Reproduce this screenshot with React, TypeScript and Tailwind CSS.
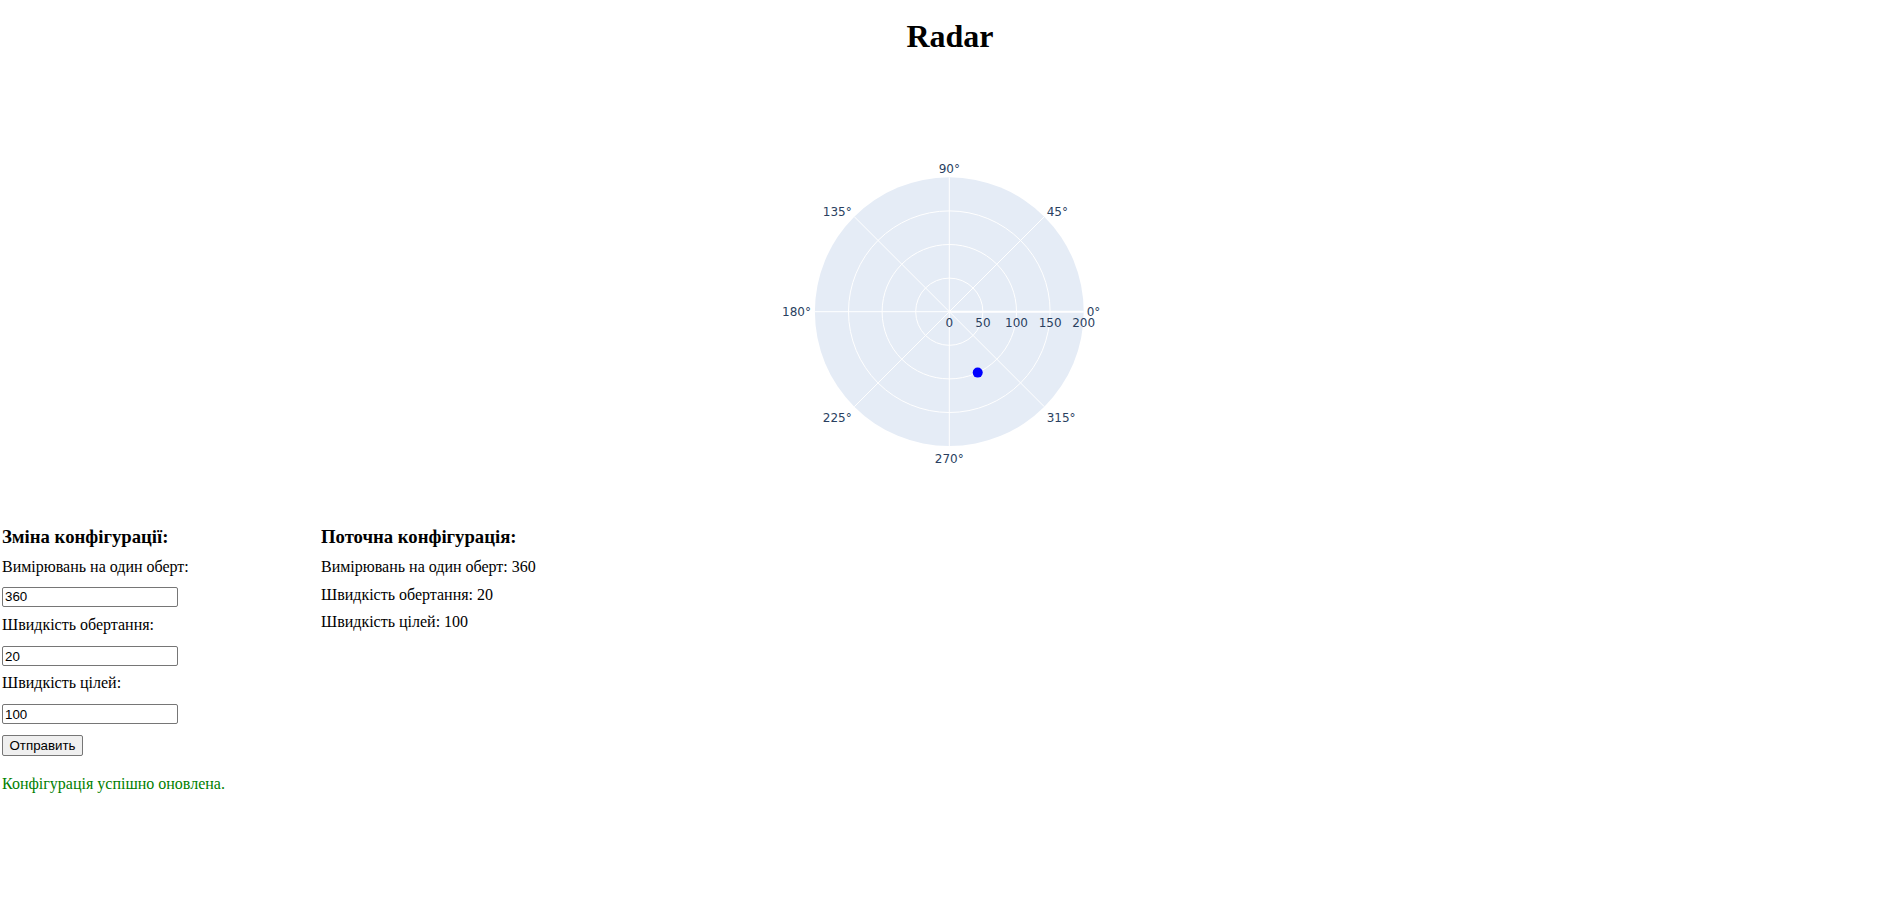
import { useState } from 'react'

const CX = 199.3
const CY = 257.7
const R = 134.4
const MAX_R = 200

// point on the polar plot, r in data units, theta in degrees
const toXY = (r: number, theta: number) => {
  const rad = (theta * Math.PI) / 180
  const d = (r / MAX_R) * R
  return { x: CX + d * Math.cos(rad), y: CY - d * Math.sin(rad) }
}

const angleLabels = [
  { text: '0°', x: 336.7, y: 262, anchor: 'start' },
  { text: '45°', x: 296.7, y: 162, anchor: 'start' },
  { text: '90°', x: CX, y: 118.5, anchor: 'middle' },
  { text: '135°', x: 101.7, y: 162, anchor: 'end' },
  { text: '180°', x: 61, y: 262, anchor: 'end' },
  { text: '225°', x: 101.7, y: 367.7, anchor: 'end' },
  { text: '270°', x: CX, y: 408.5, anchor: 'middle' },
  { text: '315°', x: 296.7, y: 367.7, anchor: 'start' },
]

function RadarChart({ targets }: { targets: { r: number; theta: number }[] }) {
  return (
    <svg width={400} height={472} className="block mx-auto">
      <circle cx={CX} cy={CY} r={R} fill="#E5ECF6" />
      {[1, 2, 3].map((i) => (
        <circle key={i} cx={CX} cy={CY} r={(R / 4) * i} fill="none" stroke="#ffffff" strokeWidth={1} />
      ))}
      {[0, 45, 90, 135, 180, 225, 270, 315].map((a) => {
        const p = toXY(MAX_R, a)
        return <line key={a} x1={CX} y1={CY} x2={p.x} y2={p.y} stroke="#ffffff" strokeWidth={a === 0 ? 2 : 1} />
      })}
      <g fontFamily="'DejaVu Sans', Verdana, sans-serif" fontSize={12} fill="#2a3f5f">
        {angleLabels.map((l) => (
          <text key={l.text} x={l.x} y={l.y} textAnchor={l.anchor as 'start' | 'middle' | 'end'}>
            {l.text}
          </text>
        ))}
        {[0, 50, 100, 150, 200].map((v) => (
          <text key={v} x={CX + (v / MAX_R) * R} y={273.3} textAnchor="middle">
            {v}
          </text>
        ))}
      </g>
      {targets.map((t, i) => {
        const p = toXY(t.r, t.theta)
        return <circle key={i} cx={p.x} cy={p.y} r={5} fill="#0000ff" />
      })}
    </svg>
  )
}

export default function App() {
  const [measurements, setMeasurements] = useState('360')
  const [rotation, setRotation] = useState('20')
  const [targetSpeed, setTargetSpeed] = useState('100')
  const [config, setConfig] = useState({ measurements: 360, rotation: 20, targetSpeed: 100 })
  const [message, setMessage] = useState('Конфігурація успішно оновлена.')

  const handleSubmit = (e: React.FormEvent) => {
    e.preventDefault()
    setConfig({
      measurements: Number(measurements),
      rotation: Number(rotation),
      targetSpeed: Number(targetSpeed),
    })
    setMessage('Конфігурація успішно оновлена.')
  }

  const inputClass =
    'block w-[176px] h-[20px] px-[2px] py-[1px] border border-[#767676] rounded-[2px] bg-white text-[13.33px] leading-[16px] text-black font-["Liberation_Sans",Arial,sans-serif]'

  return (
    <div className="min-h-screen bg-white text-black font-['Liberation_Serif','Times_New_Roman',serif]">
      <h1 className="pt-[18px] text-center text-[32px] leading-[36px] font-bold">Radar</h1>

      <RadarChart targets={[{ r: 100, theta: 295 }]} />

      <div className="flex">
        {/* Config form */}
        <form onSubmit={handleSubmit} className="w-[321px] pl-[2px]">
          <h3 className="text-[18.72px] leading-[22px] font-bold">Зміна конфігурації:</h3>
          <label className="block mt-[10px] text-[16px] leading-[18px]">Вимірювань на один оберт:</label>
          <input
            type="text"
            value={measurements}
            onChange={(e) => setMeasurements(e.target.value)}
            className={`mt-[10.5px] ${inputClass}`}
          />
          <label className="block mt-[9.5px] text-[16px] leading-[18px]">Швидкість обертання:</label>
          <input
            type="text"
            value={rotation}
            onChange={(e) => setRotation(e.target.value)}
            className={`mt-[12px] ${inputClass}`}
          />
          <label className="block mt-[8px] text-[16px] leading-[18px]">Швидкість цілей:</label>
          <input
            type="text"
            value={targetSpeed}
            onChange={(e) => setTargetSpeed(e.target.value)}
            className={`mt-[12px] ${inputClass}`}
          />
          <button
            type="submit"
            className="block mt-[11px] w-[81px] h-[21px] border border-[#767676] rounded-[2px] bg-[#efefef] text-[13.33px] leading-[16px] text-black font-['Liberation_Sans',Arial,sans-serif]"
          >
            Отправить
          </button>
          {message && <p className="mt-[19px] text-[16px] leading-[18px] text-[#008000]">{message}</p>}
        </form>

        {/* Current config */}
        <div>
          <h3 className="text-[18.72px] leading-[22px] font-bold">Поточна конфігурація:</h3>
          <p className="mt-[10px] text-[16px] leading-[18px]">Вимірювань на один оберт: {config.measurements}</p>
          <p className="mt-[9.5px] text-[16px] leading-[18px]">Швидкість обертання: {config.rotation}</p>
          <p className="mt-[9.5px] text-[16px] leading-[18px]">Швидкість цілей: {config.targetSpeed}</p>
        </div>
      </div>
    </div>
  )
}
